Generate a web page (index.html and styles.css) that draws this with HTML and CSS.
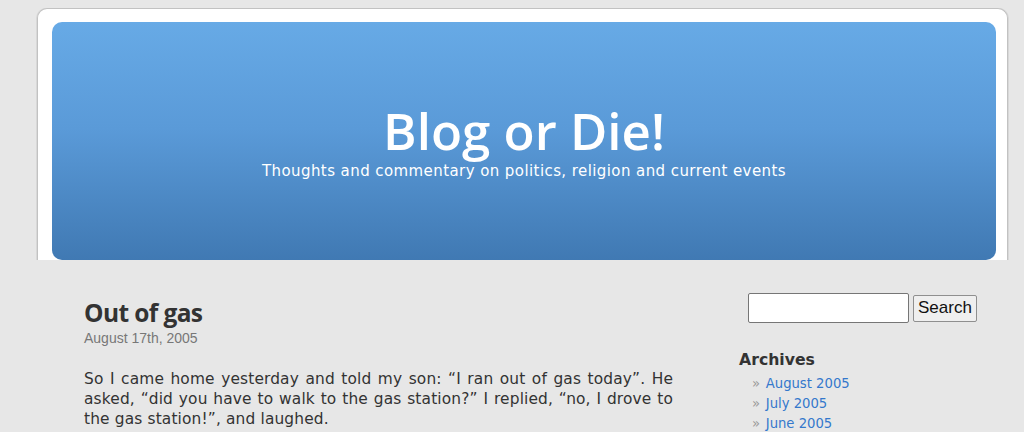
FILE: index.html
```html
<!DOCTYPE html>
<html>
<head>
<meta charset="utf-8">
<link rel="stylesheet" href="styles.css">
</head>
<body>
<div class="page">
  <div class="header">
    <h1 class="blog-title">Blog or Die!</h1>
    <div class="description">Thoughts and commentary on politics, religion and current events</div>
  </div>
</div>
<div class="content-row">
  <div class="main">
    <div class="post">
      <h2 class="post-title">Out of gas</h2>
      <div class="post-date">August 17th, 2005</div>
      <p class="entry">So I came home yesterday and told my son: “I ran out of gas today”. He asked, “did you have to walk to the gas station?” I replied, “no, I drove to the gas station!”, and laughed.</p>
    </div>
  </div>
  <div class="sidebar">
    <form class="search">
      <input class="search-input" type="text">
      <button class="search-btn" type="button">Search</button>
    </form>
    <h3 class="widget-title">Archives</h3>
    <ul class="archives">
      <li><a href="#">August 2005</a></li>
      <li><a href="#">July 2005</a></li>
      <li><a href="#">June 2005</a></li>
    </ul>
  </div>
</div>
</body>
</html>
```
FILE: styles.css
```css
html, body {
  margin: 0;
  padding: 0;
  background: #e7e7e7;
}
body {
  padding: 8px 16px 0 37px;
  font-family: "DejaVu Sans", Verdana, sans-serif;
  color: #333;
}
.page {
  background: #fff;
  border: 1px solid #c2c2c2;
  border-bottom: none;
  border-radius: 10px 10px 0 0;
  box-shadow: 1px 0 0 #d8d8d8, -1px 0 0 #d8d8d8;
  padding: 13px 11px 0 14px;
}
.header {
  height: 238px;
  box-sizing: border-box;
  padding-top: 80px;
  border-radius: 10px;
  background: linear-gradient(to bottom, #67aae6 0%, #5a9ad8 45%, #4079b3 100%);
  display: flex;
  flex-direction: column;
  align-items: center;
  color: #fff;
}
.blog-title {
  margin: 0;
  font-family: "Open Sans", sans-serif;
  font-weight: 600;
  font-size: 51px;
  line-height: 56px;
}
.description {
  margin-top: 4px;
  font-size: 15px;
  line-height: 18px;
  letter-spacing: 0.42px;
}
.content-row {
  display: flex;
  padding-top: 33px;
}
.main {
  width: 589px;
  margin-left: 47px;
  padding-top: 4px;
}
.post-title {
  margin: 0;
  font-family: "Open Sans", sans-serif;
  font-weight: 700;
  font-size: 24.5px;
  line-height: 32px;
  letter-spacing: -0.6px;
  color: #333;
}
.post-date {
  margin-top: 1px;
  font-family: "Liberation Sans", Arial, sans-serif;
  font-size: 14px;
  color: #777;
  line-height: 16px;
}
.entry {
  margin: 23px 0 0;
  font-size: 15.4px;
  line-height: 20px;
  letter-spacing: 0.15px;
  text-align: justify;
}
.sidebar {
  margin-left: 66px;
  width: 250px;
}
.search {
  display: flex;
  align-items: center;
  margin: 0 0 0 9px;
  gap: 4px;
}
.search-input {
  width: 161px;
  height: 30px;
  box-sizing: border-box;
  border: 1px solid #767676;
  border-radius: 2px;
  background: #fff;
  padding: 0;
}
.search-btn {
  height: 27px;
  box-sizing: border-box;
  font-family: "Liberation Sans", Arial, sans-serif;
  font-size: 17px;
  color: #111;
  background: #efefef;
  border: 1px solid #8f8f8f;
  border-radius: 2px;
  padding: 0 4px;
}
.widget-title {
  margin: 28px 0 0;
  font-size: 15.7px;
  font-weight: bold;
  line-height: 18px;
  color: #333;
}
.archives {
  list-style: none;
  margin: 5px 0 0;
  padding: 0 0 0 13px;
}
.archives li {
  font-size: 13.2px;
  line-height: 20px;
}
.archives li::before {
  content: "»";
  color: #999;
  margin-right: 5.7px;
}
.archives a {
  color: #3478cc;
  text-decoration: none;
}
```
